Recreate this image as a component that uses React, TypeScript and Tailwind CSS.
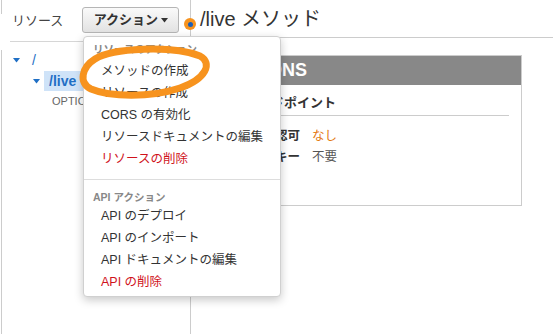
const RESOURCE_ACTIONS = [
	{ label: "メソッドの作成" },
	{ label: "リソースの作成" },
	{ label: "CORS の有効化" },
	{ label: "リソースドキュメントの編集" },
	{ label: "リソースの削除", danger: true },
];

const API_ACTIONS = [
	{ label: "API のデプロイ" },
	{ label: "API のインポート" },
	{ label: "API ドキュメントの編集" },
	{ label: "API の削除", danger: true },
];

function Caret({ className }: { className: string }) {
	return (
		<svg width="7" height="5" viewBox="0 0 7 5" className={className}>
			<polygon points="0,0 7,0 3.5,4.5" fill="currentColor" />
		</svg>
	);
}

function MenuItem({ label, danger }: { label: string; danger?: boolean }) {
	return (
		<div
			className={`h-[22px] flex items-center pl-[17px] text-[12.5px] ${
				danger ? "text-[#d0121b]" : "text-[#333]"
			}`}
		>
			{label}
		</div>
	);
}

function ActionsMenu() {
	return (
		<div className="absolute left-[83px] top-[36px] w-[198px] h-[261px] bg-white border border-[#d0d0d0] rounded-[4px] shadow-[0_3px_10px_rgba(0,0,0,0.22)] pt-[6px]">
			<div className="h-[14px] mb-[3px] flex items-center pl-[9px] text-[10.5px] font-bold text-[#888]">
				リソースのアクション
			</div>
			{RESOURCE_ACTIONS.map((a) => (
				<MenuItem key={a.label} {...a} />
			))}
			<div className="mt-[9px] border-t border-[#ddd]" />
			<div className="h-[14px] mt-[11px] flex items-center pl-[9px] text-[10.5px] font-bold text-[#888]">
				API アクション
			</div>
			{API_ACTIONS.map((a) => (
				<MenuItem key={a.label} {...a} />
			))}
		</div>
	);
}

export default function App() {
	return (
		<div className="relative w-[553px] h-[334px] overflow-hidden bg-white font-['Liberation_Sans','Noto_Sans_CJK_JP',sans-serif] flex">
			{/* resource tree column */}
			<div className="w-[191px] shrink-0 border-r border-[#ccc] flex flex-col">
				<div className="h-[41px] flex">
					<div className="w-px h-[14px] ml-px bg-[#ccc]" />
					<div className="flex items-center">
						<span className="ml-[10px] mt-[1px] text-[13px] text-[#444]">リソース</span>
						<button className="ml-[19px] w-[97px] h-[26px] -mt-[1px] flex items-center justify-center gap-[3px] rounded-[3px] border border-[#b5b5b5] bg-gradient-to-b from-[#fafafa] to-[#e2e2e2] text-[13px] font-bold text-[#333]">
							アクション
							<Caret className="text-[#333] mt-[1px]" />
						</button>
					</div>
				</div>
				<div className="ml-[10px] border-t border-[#d6d6d6]" />
				<div className="mt-[8px] ml-px flex-1 border-l border-[#ccc] text-[14px]">
					<div className="h-[20px] flex items-center pl-[11px]">
						<Caret className="text-[#1f6fc5]" />
						<span className="ml-[12px] text-[#1f6fc5]">/</span>
					</div>
					<div className="h-[20px] mt-px flex items-center pl-[31px]">
						<Caret className="text-[#1f6fc5]" />
						<span className="ml-[4px] h-[20px] w-[50px] pl-[5px] flex items-center bg-[#cfe3f8] font-bold text-[#1f6fc5]">
							/live
						</span>
					</div>
					<div className="h-[18px] mt-px flex items-center pl-[50px] text-[11px] text-[#666]">
						OPTIONS
					</div>
				</div>
			</div>

			{/* method pane */}
			<div className="flex-1 flex flex-col">
				<div className="h-[38px] border-b border-[#ccc] flex items-center pl-[9px] text-[20px] text-[#333]">
					/live メソッド
				</div>
				<div className="mt-[17px] ml-[23px] w-[308px] h-[151px] border border-[#ccc]">
					<div className="h-[29px] bg-[#888] flex items-center pl-[11px] text-[18px] font-bold text-white">
						OPTIONS
					</div>
					<div className="ml-[8px] mr-[12px] pl-[22px] pt-[8px] pb-[2px] border-b border-[#ccc] text-[13px] leading-[20px] font-bold text-[#333]">
						エンドポイント
					</div>
					<div className="mt-[10px] flex flex-col text-[12.5px] leading-[20px]">
						<div className="flex">
							<span className="w-[85px] text-right font-bold text-[#333]">認可</span>
							<span className="ml-[12px] text-[#e47911]">なし</span>
						</div>
						<div className="mt-px flex">
							<span className="w-[85px] text-right font-bold text-[#333]">API キー</span>
							<span className="ml-[12px] text-[#555]">不要</span>
						</div>
					</div>
				</div>
			</div>

			<ActionsMenu />

			{/* annotation marks */}
			<div className="absolute left-[184px] top-[18px] w-[12px] h-[12px] rounded-full bg-[#f7931e] flex items-center justify-center">
				<div className="w-[5px] h-[5px] rounded-full bg-[#1b5fb8]" />
			</div>
			<svg className="absolute left-0 top-0 pointer-events-none" width="553" height="334">
				<path
					d="M 95 59 C 112 48, 172 45, 200 56 C 213 63, 206 79, 180 88 C 150 98, 110 97, 91 89 C 78 83, 82 67, 95 59"
					fill="none"
					stroke="#f7931e"
					strokeWidth="7"
					strokeLinecap="round"
				/>
			</svg>
		</div>
	);
}
